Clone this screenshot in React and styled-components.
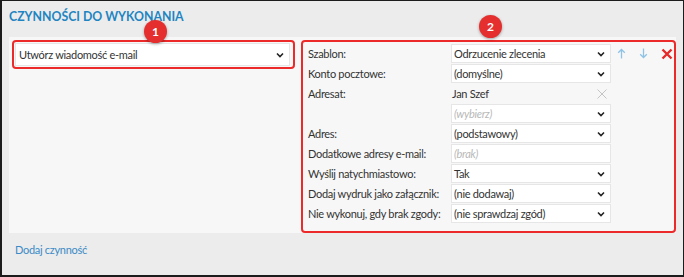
import React from 'react';
import styled, { createGlobalStyle } from 'styled-components';

const GlobalStyle = createGlobalStyle`
  html, body { margin: 0; padding: 0; }
  body {
    font-family: Lato, "Open Sans", sans-serif;
    font-size: 11px;
    letter-spacing: -0.3px;
    color: #333;
    background: #ececec;
  }
`;

const Frame = styled.div`
  box-sizing: border-box;
  width: 684px;
  height: 277px;
  background: #ececec;
  border: 1px solid #1c1c1c;
  border-left-width: 2px;
  border-bottom-width: 2px;
  padding: 0 7px;
`;

const Title = styled.h2`
  margin: 0;
  padding: 8px 0 0 0;
  height: 36px;
  box-sizing: border-box;
  font-size: 12.3px;
  font-weight: 700;
  letter-spacing: 0;
  color: #1e85c2;
  line-height: 16px;
`;

const Panel = styled.div`
  display: flex;
  gap: 6px;
  background: #f7f7f7;
  padding: 3px 0 1px 3px;
  height: 196px;
  box-sizing: border-box;
`;

const Highlight = styled.div`
  position: relative;
  box-sizing: border-box;
  border: 2px solid #ec2a2a;
  border-radius: 4px;
  width: ${p => p.$width}px;
  height: ${p => p.$height}px;
  padding: ${p => p.$pad};
`;

const Badge = styled.span`
  position: absolute;
  top: ${p => p.$top}px;
  left: ${p => p.$left}px;
  width: 23px;
  height: 23px;
  border-radius: 50%;
  background: #e52e2e;
  color: #fff;
  font-size: 12px;
  font-weight: 700;
  letter-spacing: 0;
  display: flex;
  align-items: center;
  justify-content: center;
  box-shadow: 0 1px 3px rgba(0, 0, 0, 0.35);
`;

const Select = styled.div`
  box-sizing: border-box;
  display: flex;
  align-items: center;
  justify-content: space-between;
  height: ${p => p.$height || 19}px;
  background: #fff;
  border: 1px solid #e6e6e6;
  padding: 0 5px 0 ${p => p.$padLeft || 2}px;
  color: ${p => (p.$placeholder ? '#b8b8b8' : '#333')};
  font-style: ${p => (p.$placeholder ? 'italic' : 'normal')};
  white-space: nowrap;
`;

const RightInner = styled.div`
  display: flex;
  padding-left: 5px;
`;

const Form = styled.div`
  display: grid;
  grid-template-columns: 143px 160px;
  grid-auto-rows: 19px;
  row-gap: 1px;
`;

const Label = styled.div`
  display: flex;
  align-items: center;
  white-space: nowrap;
`;

const PlainValue = styled.div`
  display: flex;
  align-items: center;
  justify-content: space-between;
  padding: 0 4px 0 1px;
`;

const Actions = styled.div`
  display: flex;
  align-items: center;
  height: 19px;
  gap: 2px;
`;

const IconButton = styled.span`
  width: ${p => p.$width || 20}px;
  height: 19px;
  display: flex;
  align-items: center;
  justify-content: center;
`;

const AddLink = styled.a`
  display: block;
  margin: 10px 0 0 6px;
  color: #3b8bc6;
  text-decoration: none;
`;

const Chevron = () => (
  <svg width="8" height="6" viewBox="0 0 8 6">
    <path d="M1 1.5 L4 4.5 L7 1.5" fill="none" stroke="#222" strokeWidth="1.6" />
  </svg>
);

const Clear = () => (
  <svg width="10" height="10" viewBox="0 0 10 10">
    <path d="M0.5 0.5 L9.5 9.5 M9.5 0.5 L0.5 9.5" stroke="#c4c4c4" strokeWidth="1" />
  </svg>
);

const Arrow = ({ down }) => (
  <svg width="9" height="11" viewBox="0 0 9 11" style={down ? { transform: 'rotate(180deg)' } : undefined}>
    <path d="M4.5 10.5 V1.5 M1.2 4.8 L4.5 1.5 L7.8 4.8" fill="none" stroke="#8fc3e6" strokeWidth="1.3" />
  </svg>
);

const Remove = () => (
  <svg width="12" height="12" viewBox="0 0 12 12">
    <path d="M1.5 1.5 L10.5 10.5 M10.5 1.5 L1.5 10.5" stroke="#e62828" strokeWidth="2.4" />
  </svg>
);

const rows = [
  { label: 'Szablon:', value: 'Odrzucenie zlecenia' },
  { label: 'Konto pocztowe:', value: '(domyślne)' },
  { label: 'Adresat:', value: 'Jan Szef', plain: true },
  { label: '', value: '(wybierz)', placeholder: true },
  { label: 'Adres:', value: '(podstawowy)' },
  { label: 'Dodatkowe adresy e-mail:', value: '(brak)', placeholder: true, input: true },
  { label: 'Wyślij natychmiastowo:', value: 'Tak' },
  { label: 'Dodaj wydruk jako załącznik:', value: '(nie dodawaj)' },
  { label: 'Nie wykonuj, gdy brak zgody:', value: '(nie sprawdzaj zgód)' },
];

export default function App() {
  return (
    <>
      <GlobalStyle />
      <Frame>
        <Title>CZYNNOŚCI DO WYKONANIA</Title>
        <Panel>
          <Highlight $width={285} $height={29} $pad="1px 3px 0 1px">
            <Badge $left={130} $top={-22}>1</Badge>
            <Select $height={23} $padLeft={3}>
              Utwórz wiadomość e-mail
              <Chevron />
            </Select>
          </Highlight>
          <Highlight $width={375} $height={193} $pad="2px 0 0 0">
            <Badge $left={176} $top={-27}>2</Badge>
            <RightInner>
              <Form>
                {rows.map((r, i) => (
                  <React.Fragment key={i}>
                    <Label>{r.label}</Label>
                    {r.plain ? (
                      <PlainValue>
                        {r.value}
                        <Clear />
                      </PlainValue>
                    ) : (
                      <Select $placeholder={r.placeholder}>
                        {r.value}
                        {!r.input && <Chevron />}
                      </Select>
                    )}
                  </React.Fragment>
                ))}
              </Form>
              <Actions>
                <IconButton><Arrow /></IconButton>
                <IconButton><Arrow down /></IconButton>
                <IconButton $width={24}><Remove /></IconButton>
              </Actions>
            </RightInner>
          </Highlight>
        </Panel>
        <AddLink href="#">Dodaj czynność</AddLink>
      </Frame>
    </>
  );
}
